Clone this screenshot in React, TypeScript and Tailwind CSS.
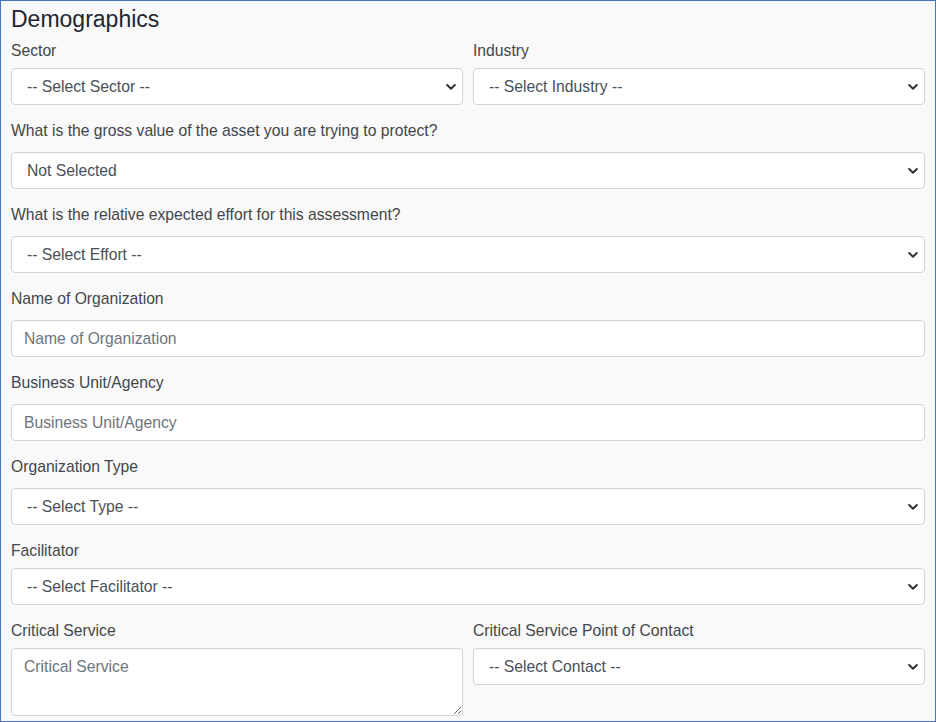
import React from "react";

const font = { fontFamily: '"Liberation Sans", Arial, sans-serif' };

function Chevron() {
    return (
        <svg
            className="pointer-events-none absolute right-[7px] top-1/2 -translate-y-1/2"
            width="10"
            height="7"
            viewBox="0 0 10 7"
            fill="none"
        >
            <path d="M1.2 1.5 L5 5.2 L8.8 1.5" stroke="#333" strokeWidth="2" strokeLinecap="round" strokeLinejoin="round" />
        </svg>
    );
}

function Select({ value }: { value: string }) {
    return (
        <div className="relative w-full">
            <select
                defaultValue=""
                className="block w-full h-[37px] appearance-none rounded-[4px] border border-[#ced4da] bg-white pl-[15px] pr-[28px] text-[15.7px] text-[#495057] outline-none"
            >
                <option value="">{value}</option>
            </select>
            <Chevron />
        </div>
    );
}

function Input({ placeholder }: { placeholder: string }) {
    return (
        <input
            type="text"
            placeholder={placeholder}
            className="block w-full h-[37px] rounded-[4px] border border-[#ced4da] bg-white px-[12px] text-[15.7px] text-[#495057] placeholder:text-[#6c757d] outline-none"
        />
    );
}

function Field({
    label,
    tight,
    last,
    children,
}: {
    label: string;
    tight?: boolean;
    last?: boolean;
    children: React.ReactNode;
}) {
    return (
        <div className={`flex flex-col w-full ${last ? "" : "mb-[14px]"}`}>
            <label className={`text-[15.7px] leading-[24px] text-[#42464b] ${tight ? "mb-[5px]" : "mb-[9px]"}`}>
                {label}
            </label>
            {children}
        </div>
    );
}

export default function App() {
    return (
        <div
            style={font}
            className="w-[936px] h-[722px] bg-[#f9f9f9] border border-[#4472c4] px-[10px] pt-[4px] overflow-hidden"
        >
            <h2 className="text-[23px] leading-[28px] text-[#1d2630] mb-[6px]">Demographics</h2>

            <div className="grid grid-cols-2 gap-x-[10px]">
                <Field label="Sector" tight>
                    <Select value="-- Select Sector --" />
                </Field>
                <Field label="Industry" tight>
                    <Select value="-- Select Industry --" />
                </Field>
            </div>

            <Field label="What is the gross value of the asset you are trying to protect?">
                <Select value="Not Selected" />
            </Field>

            <Field label="What is the relative expected effort for this assessment?">
                <Select value="-- Select Effort --" />
            </Field>

            <Field label="Name of Organization">
                <Input placeholder="Name of Organization" />
            </Field>

            <Field label="Business Unit/Agency">
                <Input placeholder="Business Unit/Agency" />
            </Field>

            <Field label="Organization Type">
                <Select value="-- Select Type --" />
            </Field>

            <Field label="Facilitator" tight>
                <Select value="-- Select Facilitator --" />
            </Field>

            <div className="grid grid-cols-2 gap-x-[10px] items-start">
                <Field label="Critical Service" tight last>
                    <textarea
                        placeholder="Critical Service"
                        className="block w-full h-[68px] rounded-[4px] border border-[#ced4da] bg-white px-[12px] py-[6px] text-[15.7px] leading-[24px] text-[#495057] placeholder:text-[#6c757d] outline-none resize-y"
                    />
                </Field>
                <Field label="Critical Service Point of Contact" tight last>
                    <Select value="-- Select Contact --" />
                </Field>
            </div>
        </div>
    );
}
